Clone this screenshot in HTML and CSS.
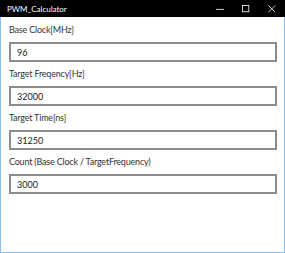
FILE: index.html
```html
<!DOCTYPE html>
<html lang="en">
<head>
    <meta charset="UTF-8">
    <meta name="viewport" content="width=device-width, initial-scale=1.0">
    <title>PWM_Calculator</title>
    <link rel="stylesheet" href="styles.css">
</head>
<body>
    <div class="window">
        <div class="title-bar">
            <span class="title">PWM_Calculator</span>
            <div class="controls">
                <span class="ctl">
                    <svg width="10" height="10" viewBox="0 0 10 10"><line x1="0" y1="5.5" x2="10" y2="5.5" stroke="#fff" stroke-width="1"/></svg>
                </span>
                <span class="ctl">
                    <svg width="10" height="10" viewBox="0 0 10 10"><rect x="0.5" y="0.5" width="8" height="8" fill="none" stroke="#fff" stroke-width="1"/></svg>
                </span>
                <span class="ctl">
                    <svg width="10" height="10" viewBox="0 0 10 10"><path d="M0.5 0.5 L9 9 M9 0.5 L0.5 9" stroke="#fff" stroke-width="1"/></svg>
                </span>
            </div>
        </div>
        <div class="content">
            <div class="form-group">
                <label for="baseClock">Base Clock[MHz]</label>
                <input type="text" id="baseClock" value="96">
            </div>
            <div class="form-group">
                <label for="targetFreq">Target Freqency[Hz]</label>
                <input type="text" id="targetFreq" value="32000">
            </div>
            <div class="form-group">
                <label for="targetTime">Target Time[ns]</label>
                <input type="text" id="targetTime" value="31250">
            </div>
            <div class="form-group">
                <label for="count">Count (Base Clock / TargetFrequency)</label>
                <input type="text" id="count" value="3000">
            </div>
        </div>
    </div>
</body>
</html>
```

FILE: styles.css
```css
body {
    margin: 0;
    font-family: Lato, "Noto Sans", sans-serif;
    background-color: #fff;
}
.window {
    width: 285px;
    height: 253px;
    box-sizing: border-box;
    border: 1px solid #84c1f0;
    border-top: none;
    display: flex;
    flex-direction: column;
}
.title-bar {
    height: 17px;
    background-color: #000;
    display: flex;
    align-items: center;
    justify-content: space-between;
    margin: 0 -1px;
    padding-left: 7px;
}
.title {
    color: #fff;
    font-size: 8px;
}
.controls {
    display: flex;
    height: 100%;
}
.ctl {
    width: 26px;
    display: flex;
    align-items: center;
    justify-content: center;
}
.ctl svg {
    width: 8px;
    height: 8px;
}
.content {
    padding: 6px 7px 0 8px;
}
.form-group {
    display: flex;
    flex-direction: column;
}
.form-group label {
    height: 14px;
    line-height: 14px;
    font-size: 9px;
    letter-spacing: -0.2px;
    color: #333;
    margin-bottom: 5px;
}
.form-group input {
    height: 20px;
    box-sizing: border-box;
    border: 2px solid #8c8c8c;
    padding: 0 6px;
    margin: 0 0 5px 0;
    font-family: inherit;
    font-size: 9px;
    color: #222;
    outline: none;
}
```
